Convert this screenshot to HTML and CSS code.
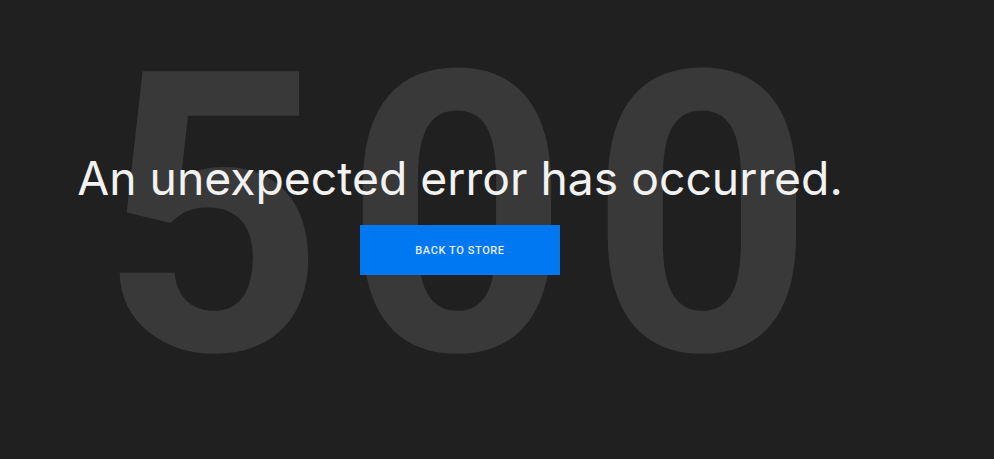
FILE: index.html
```html
<!DOCTYPE html>
<html>
<head>
<meta charset="utf-8">
<link rel="stylesheet" href="styles.css">
</head>
<body>
<main class="page">
  <div class="code" aria-hidden="true">500</div>
  <div class="content">
    <h1 class="title">An unexpected error has occurred.</h1>
    <a class="btn" href="#">BACK TO STORE</a>
  </div>
</main>
</body>
</html>
```

FILE: styles.css
```css
html, body {
  margin: 0;
  padding: 0;
  background: #202020;
  height: 100%;
  overflow: hidden;
}
.page {
  position: relative;
  width: 920px;
  height: 459px;
}
.code {
  position: absolute;
  left: 0;
  right: 0;
  top: 0;
  text-align: center;
  font-family: Roboto, sans-serif;
  font-weight: 700;
  font-size: 392px;
  line-height: 1;
  letter-spacing: 20px;
  text-indent: 14px;
  color: #393939;
  margin-top: 20px;
}
.content {
  position: relative;
  display: flex;
  flex-direction: column;
  align-items: center;
  padding-top: 148px;
}
.title {
  margin: 0;
  font-family: Inter, sans-serif;
  font-weight: 400;
  font-size: 46.3px;
  line-height: 60px;
  color: #f2f2f2;
}
.btn {
  margin-top: 17px;
  width: 200px;
  height: 50px;
  display: flex;
  align-items: center;
  justify-content: center;
  background: #0078f2;
  color: #e8eef8;
  font-family: Roboto, sans-serif;
  font-size: 11px;
  font-weight: 500;
  letter-spacing: 0.6px;
  text-decoration: none;
}
```
